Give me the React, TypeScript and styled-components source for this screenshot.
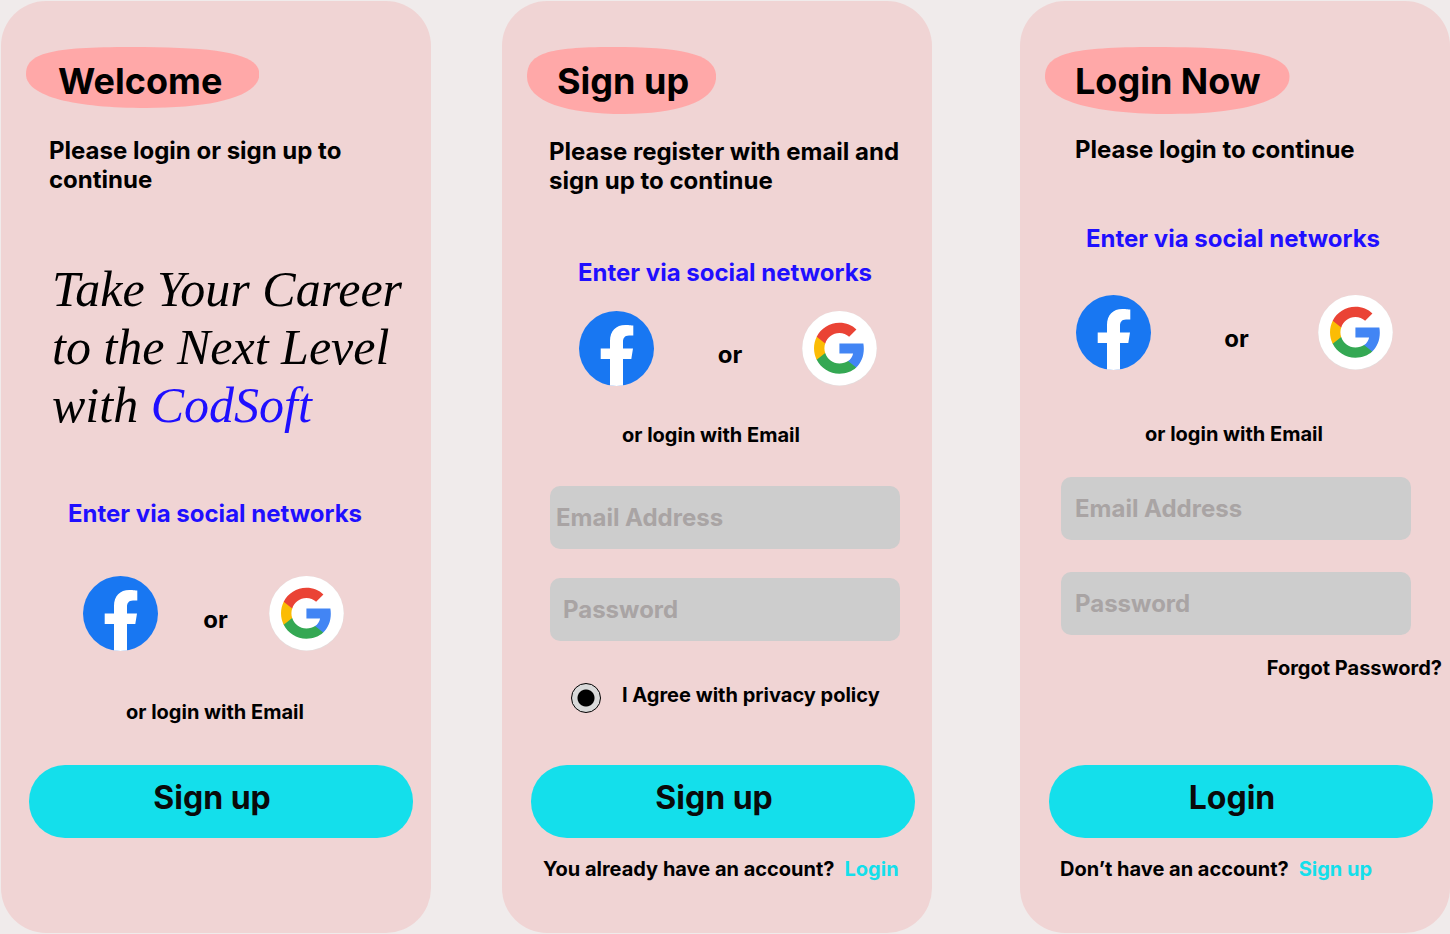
import React from "react";
import styled, { createGlobalStyle } from "styled-components";

const color = {
  page: "#f0ebeb",
  card: "#f0d4d4",
  blob: "#ffa8a8",
  accent: "#14dfeb",
  link: "#1f0fff",
  field: "#cdcdcd",
  hint: "#a9a4a4",
};

const GlobalStyle = createGlobalStyle`
  *, *::before, *::after { box-sizing: border-box; }
  body {
    margin: 0;
    background: ${color.page};
    color: #000;
    font-family: Inter, "Liberation Sans", sans-serif;
    font-weight: 700;
  }
`;

type Space = { $top?: number; $left?: number; $right?: number };

const space = ({ $top = 0, $left = 0, $right = 0 }: Space) =>
  `margin: ${$top}px ${$right}px 0 ${$left}px;`;

const Page = styled.main`
  display: grid;
  grid-template-columns: 430fr 71px 430fr 88px 430fr;
  min-height: 100vh;
  padding: 1px 0 1px 1px;
`;

const Card = styled.section<{ $column: number }>`
  grid-column: ${(p) => p.$column};
  display: flex;
  flex-direction: column;
  min-width: 0;
  padding: 46px 0 52px;
  border-radius: 45px;
  background: ${color.card};
`;

const TitleWrap = styled.div<{ $height: number; $start: number; $end: number }>`
  position: relative;
  isolation: isolate;
  align-self: flex-start;
  height: ${(p) => p.$height}px;
  margin-left: 25px;
  padding: 12px ${(p) => p.$end}px 0 ${(p) => p.$start}px;
`;

const BlobShape = styled.svg`
  position: absolute;
  inset: 0;
  z-index: -1;
  width: 100%;
  height: 100%;
  fill: ${color.blob};
`;

const TitleText = styled.h1`
  margin: 0;
  font-size: 36px;
  line-height: 44px;
  font-weight: 700;
`;

const Subtitle = styled.p<Space>`
  ${space}
  font-size: 24px;
  line-height: 29px;
`;

const Tagline = styled.p<Space>`
  ${space}
  font-family: "Liberation Serif", serif;
  font-style: italic;
  font-weight: 400;
  font-size: 50px;
  line-height: 58px;
  white-space: nowrap;
`;

const Brand = styled.span`
  color: ${color.link};
`;

const SocialTitle = styled.h2<Space>`
  ${space}
  color: ${color.link};
  font-size: 24px;
  line-height: 29px;
  font-weight: 700;
`;

const SocialRow = styled.div<Space>`
  ${space}
  display: flex;
  align-items: center;
  justify-content: space-between;
`;

const SocialButton = styled.button`
  display: block;
  width: 75px;
  height: 75px;
  padding: 0;
  border: 0;
  border-radius: 50%;
  background: none;
  cursor: pointer;

  svg {
    display: block;
    width: 100%;
    height: 100%;
  }
`;

const Or = styled.span`
  padding: 11px 0 0 4px;
  font-size: 24px;
  line-height: 29px;
`;

const Note = styled.p<Space>`
  ${space}
  font-size: 20px;
  line-height: 24px;
`;

const Field = styled.input<Space & { $inset: number }>`
  ${space}
  height: 63px;
  min-width: 0;
  padding: 0 15px 0 ${(p) => p.$inset}px;
  border: 0;
  border-radius: 10px;
  background: ${color.field};
  font: inherit;
  font-size: 24px;

  &::placeholder {
    color: ${color.hint};
    opacity: 1;
  }
`;

const Agree = styled.label<Space>`
  ${space}
  display: flex;
  gap: 21px;
  font-size: 20px;
  line-height: 24px;
`;

const Radio = styled.input`
  appearance: none;
  flex: none;
  width: 30px;
  height: 30px;
  margin: 0;
  border: 1px solid #000;
  border-radius: 50%;
  background: #d9d9d9;

  &:checked {
    background: radial-gradient(circle, #000 8px, #d9d9d9 9px);
  }
`;

const Forgot = styled.a<Space>`
  ${space}
  align-self: flex-end;
  color: inherit;
  font-size: 20px;
  line-height: 24px;
  text-decoration: none;
`;

const Submit = styled.button<Space>`
  ${space}
  height: 73px;
  padding: 0 18px 8px 0;
  border: 0;
  border-radius: 36px;
  background: ${color.accent};
  color: #0a0a0a;
  font: inherit;
  font-size: 32px;
  cursor: pointer;
`;

const Switch = styled.p<Space>`
  ${space}
  display: flex;
  gap: 10px;
  font-size: 20px;
  line-height: 24px;

  a {
    color: ${color.accent};
    text-decoration: none;
  }
`;

function Title(props: { children: string; height: number; start: number; end: number }) {
  return (
    <TitleWrap $height={props.height} $start={props.start} $end={props.end}>
      <BlobShape viewBox="0 0 233 61" preserveAspectRatio="none" aria-hidden="true">
        <path d="M0 27C0 6 25 0 105 0C190 0 233 6 233 27C233 50 185 61 120 61C50 61 0 50 0 27Z" />
      </BlobShape>
      <TitleText>{props.children}</TitleText>
    </TitleWrap>
  );
}

function Socials(props: Space) {
  return (
    <SocialRow {...props}>
      <SocialButton type="button" aria-label="Continue with Facebook">
        <svg viewBox="0 0 75 75">
          <circle cx="37.5" cy="37.5" r="37.5" fill="#1877f2" />
          <path
            fill="#fff"
            d="M31 74.5V48H21.7V37.5H31V30C31 20 37 14 46.3 14C50 14 54.3 14.6 54.3 14.6V24.6H50C45.5 24.6 44 27.5 44 31V37.5H54L52.3 48H44V74.5Q37.5 75.4 31 74.5Z"
          />
        </svg>
      </SocialButton>
      <Or>or</Or>
      <SocialButton type="button" aria-label="Continue with Google">
        <svg viewBox="0 0 75 75">
          <circle cx="37.5" cy="37.5" r="37.5" fill="#e3dddd" />
          <circle cx="37.5" cy="37.2" r="37.2" fill="#fff" />
          <g transform="translate(9.7 9.5) scale(1.155)">
            <path fill="#4285f4" d="M45.12 24.5c0-1.56-.14-3.06-.4-4.5H24v8.51h11.84c-.51 2.75-2.06 5.08-4.39 6.64v5.52h7.11c4.16-3.83 6.56-9.47 6.56-16.17z" />
            <path fill="#34a853" d="M24 46c5.94 0 10.92-1.97 14.56-5.33l-7.11-5.52c-1.97 1.32-4.49 2.1-7.45 2.1-5.73 0-10.58-3.87-12.31-9.07H4.34v5.7C7.96 41.07 15.4 46 24 46z" />
            <path fill="#fbbc05" d="M11.69 28.18C11.25 26.86 11 25.45 11 24s.25-2.86.69-4.18v-5.7H4.34C2.85 17.09 2 20.45 2 24c0 3.55.85 6.91 2.34 9.88l7.35-5.7z" />
            <path fill="#ea4335" d="M24 10.75c3.23 0 6.13 1.11 8.41 3.29l6.31-6.31C34.91 4.18 29.93 2 24 2 15.4 2 7.96 6.93 4.34 14.12l7.35 5.7c1.73-5.2 6.58-9.07 12.31-9.07z" />
          </g>
        </svg>
      </SocialButton>
    </SocialRow>
  );
}

export default function App() {
  return (
    <>
      <GlobalStyle />
      <Page>
        <Card $column={1}>
          <Title height={61} start={32} end={37}>Welcome</Title>
          <Subtitle $top={28} $left={48} $right={60}>Please login or sign up to continue</Subtitle>
          <Tagline $top={66} $left={51}>
            Take Your Career<br />
            to the Next Level<br />
            with <Brand>CodSoft</Brand>
          </Tagline>
          <SocialTitle $top={65} $left={67}>Enter via social networks</SocialTitle>
          <Socials $top={48} $left={82} $right={87} />
          <Note $top={49} $left={125}>or login with Email</Note>
          <Submit type="button" $top={41} $left={28} $right={18}>Sign up</Submit>
        </Card>

        <Card $column={3}>
          <Title height={67} start={30} end={27}>Sign up</Title>
          <Subtitle $top={23} $left={47} $right={20}>Please register with email and sign up to continue</Subtitle>
          <SocialTitle $top={63} $left={76}>Enter via social networks</SocialTitle>
          <Socials $top={24} $left={77} $right={55} />
          <Note $top={37} $left={120}>or login with Email</Note>
          <Field $top={39} $left={48} $right={32} $inset={6} type="email" placeholder="Email Address" aria-label="Email Address" />
          <Field $top={29} $left={48} $right={32} $inset={13} type="password" placeholder="Password" aria-label="Password" />
          <Agree $top={42} $left={69}>
            <Radio type="radio" name="privacy" defaultChecked />
            I Agree with privacy policy
          </Agree>
          <Submit type="button" $top={52} $left={29} $right={17}>Sign up</Submit>
          <Switch $top={19} $left={41}>
            You already have an account? <a href="#login">Login</a>
          </Switch>
        </Card>

        <Card $column={5}>
          <Title height={67} start={30} end={29}>Login Now</Title>
          <Subtitle $top={21} $left={55} $right={20}>Please login to continue</Subtitle>
          <SocialTitle $top={60} $left={66}>Enter via social networks</SocialTitle>
          <Socials $top={42} $left={56} $right={57} />
          <Note $top={52} $left={125}>or login with Email</Note>
          <Field $top={31} $left={41} $right={39} $inset={14} type="email" placeholder="Email Address" aria-label="Email Address" />
          <Field $top={32} $left={41} $right={39} $inset={14} type="password" placeholder="Password" aria-label="Password" />
          <Forgot href="#forgot" $top={21} $right={8}>Forgot Password?</Forgot>
          <Submit type="button" $top={85} $left={29} $right={17}>Login</Submit>
          <Switch $top={19} $left={40}>
            Don’t have an account? <a href="#signup">Sign up</a>
          </Switch>
        </Card>
      </Page>
    </>
  );
}
